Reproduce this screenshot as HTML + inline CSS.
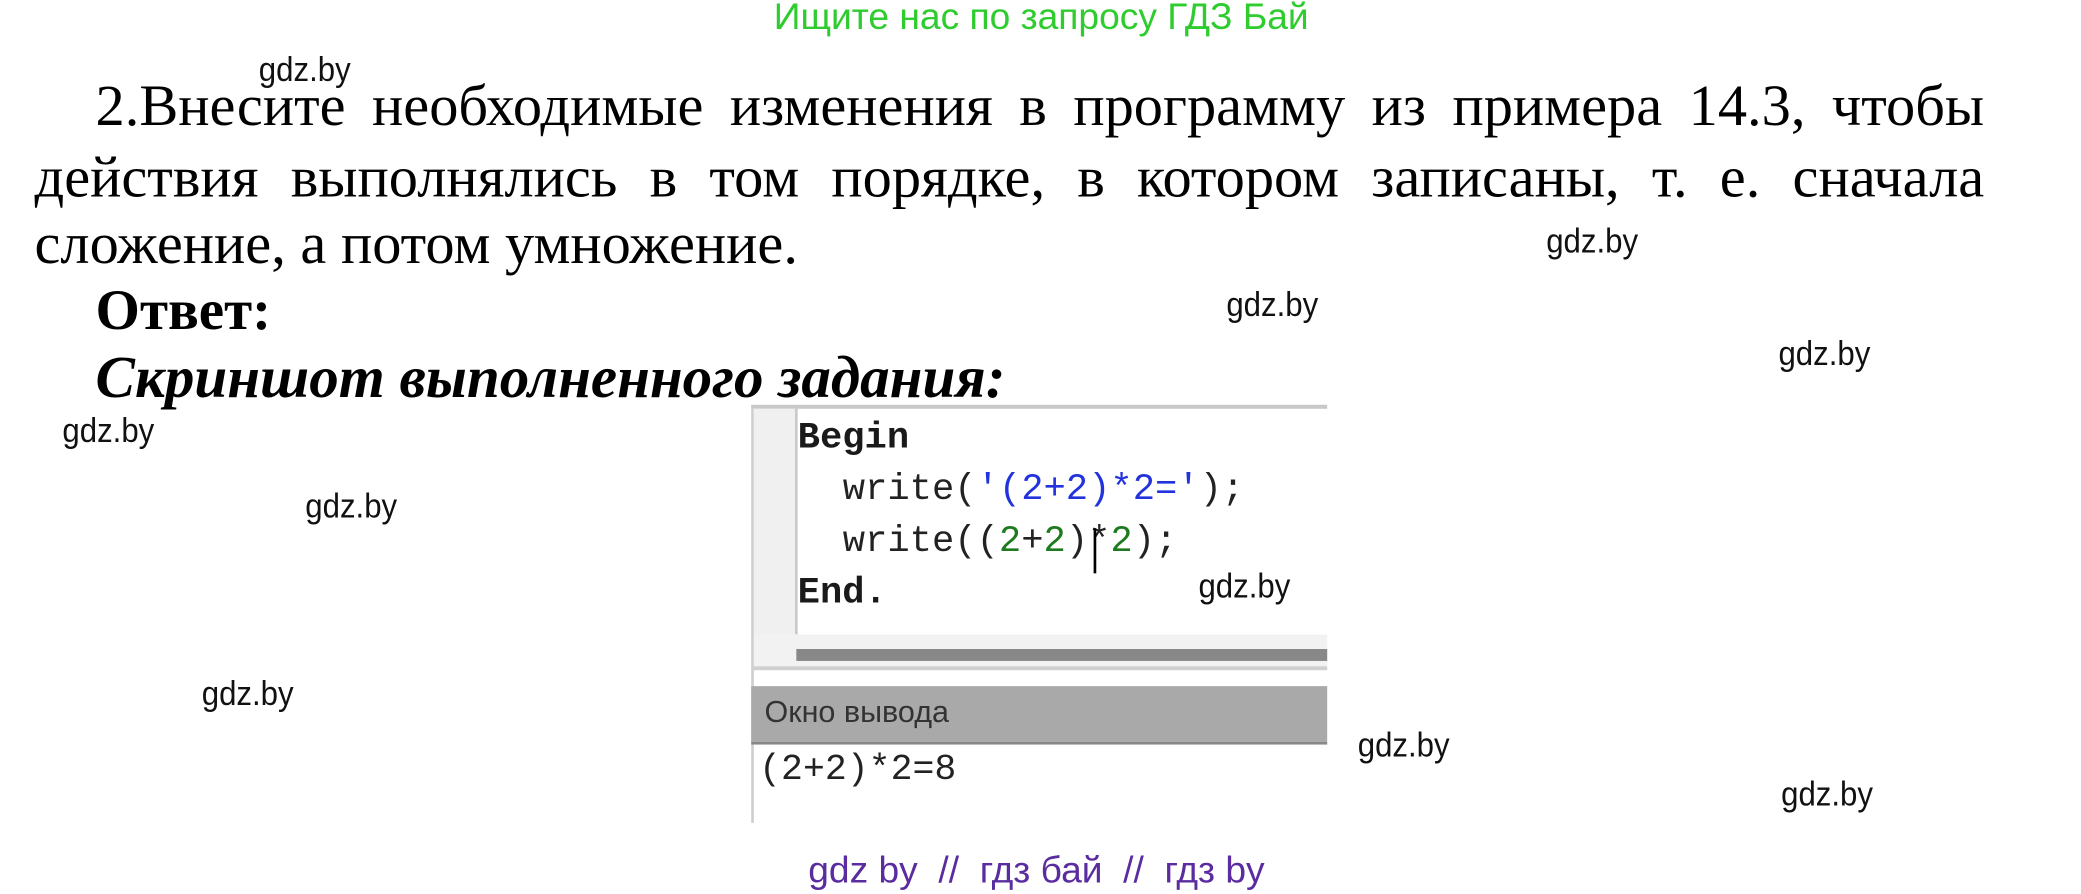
<!DOCTYPE html>
<html><head><meta charset="utf-8"><style>
html,body{margin:0;padding:0;background:#fff;overflow:hidden}
body{width:2081px;height:894px;position:relative}
#w{position:absolute;left:0;top:0;width:1568px;height:674px;transform:scale(1.3272);transform-origin:0 0}
.a{position:absolute;white-space:nowrap}
.g{font-family:"Liberation Sans",sans-serif;font-size:23.5px;color:#111;transform:scaleY(1.1);transform-origin:0 0}
.t{font-family:"Liberation Serif",serif;font-size:44px;color:#000;position:absolute;text-align:justify;text-align-last:justify;white-space:nowrap}
.c{font-family:"Liberation Mono",monospace;font-size:28px;color:#222;position:absolute;white-space:pre}
</style></head><body><div id="w">
<div class="a" style="left:583px;top:-3px;font-family:'Liberation Sans',sans-serif;font-size:28px;color:#2ecc2e">Ищите нас по запросу ГДЗ Бай</div>

<div class="t" style="left:72px;top:54px;width:1423px">2.Внесите необходимые изменения в программу из примера 14.3, чтобы</div>
<div class="t" style="left:26px;top:108px;width:1469px">действия выполнялись в том порядке, в котором записаны, т. е. сначала</div>
<div class="a" style="left:26px;top:158px;font-family:'Liberation Serif',serif;font-size:44px">сложение, а потом умножение.</div>
<div class="a" style="left:72px;top:210px;font-family:'Liberation Serif',serif;font-size:43px;font-weight:bold">Ответ:</div>
<div class="a" style="left:72px;top:258px;font-family:'Liberation Serif',serif;font-size:44.5px;font-weight:bold;font-style:italic">Скриншот выполненного задания:</div>

<div class="a" style="left:566px;top:305px;width:434px;height:3px;background:#c8c8c8"></div>
<div class="a" style="left:566px;top:308px;width:2px;height:312px;background:#cfcfcf"></div>
<div class="a" style="left:568px;top:308px;width:31px;height:170px;background:#f0f0f0"></div>
<div class="a" style="left:599px;top:308px;width:2px;height:170px;background:#c9c9c9"></div>
<div class="a" style="left:568px;top:478px;width:432px;height:24px;background:#f2f2f2"></div>
<div class="a" style="left:600px;top:489px;width:400px;height:9px;background:#888"></div>
<div class="a" style="left:566px;top:502px;width:434px;height:3px;background:#d0d0d0"></div>
<div class="a" style="left:566px;top:517px;width:434px;height:42px;background:#a9a9a9"></div>
<div class="a" style="left:576px;top:523px;font-family:'Liberation Sans',sans-serif;font-size:23px;color:#333">Окно вывода</div>
<div class="a" style="left:566px;top:559px;width:434px;height:2px;background:#888"></div>
<div class="c" style="left:601px;top:315px;font-weight:bold;color:#1a1a1a">Begin</div>
<div class="c" style="left:635px;top:354px">write(<span style="color:#2233dd">'(2+2)*2='</span>);</div>
<div class="c" style="left:635px;top:393px">write((<span style="color:#1e7a1e">2</span>+<span style="color:#1e7a1e">2</span>)*<span style="color:#1e7a1e">2</span>);</div>
<div class="a" style="left:824px;top:398px;width:2px;height:34px;background:#000"></div>
<div class="c" style="left:601px;top:432px;font-weight:bold;color:#1a1a1a">End.</div>
<div class="c" style="left:572px;top:565px;font-size:27.5px;color:#222">(2+2)*2=8</div>

<div class="a g" style="left:195px;top:38px">gdz.by</div>
<div class="a g" style="left:1165px;top:167px">gdz.by</div>
<div class="a g" style="left:924px;top:215px">gdz.by</div>
<div class="a g" style="left:1340px;top:252px">gdz.by</div>
<div class="a g" style="left:47px;top:310px">gdz.by</div>
<div class="a g" style="left:230px;top:367px">gdz.by</div>
<div class="a g" style="left:903px;top:427px">gdz.by</div>
<div class="a g" style="left:152px;top:508px">gdz.by</div>
<div class="a g" style="left:1023px;top:547px">gdz.by</div>
<div class="a g" style="left:1342px;top:584px">gdz.by</div>

<div class="a" style="left:609px;top:640px;font-family:'Liberation Sans',sans-serif;font-size:28px;color:#5a2ca0">gdz by &nbsp;// &nbsp;гдз бай &nbsp;// &nbsp;гдз by</div>
</div></body></html>
